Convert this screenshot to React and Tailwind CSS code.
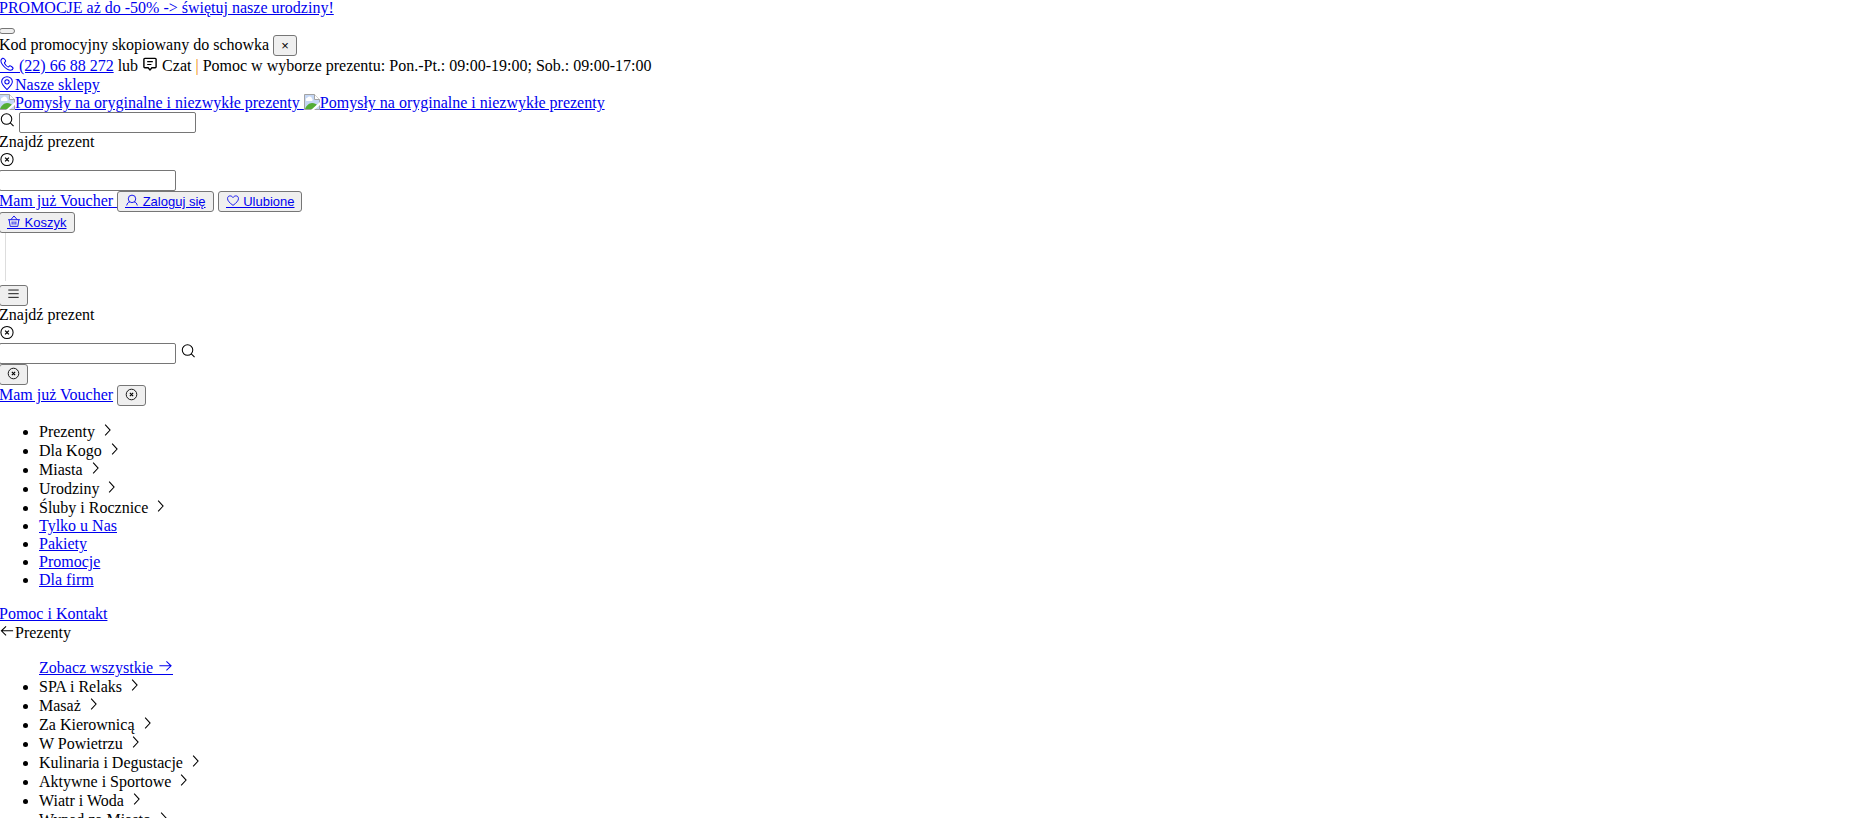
const SHAPES = {
  phone: <path d="M3.300 1.300C1 2.600 .8 5 3.200 8.200s5.600 5.600 8.300 5.900c1.600.1 2.700-1 3-2.100.1-.6-2.700-2.700-3.400-2.600-.8.100-1 1.200-1.700 1.200C8 10.500 5.200 7.300 5.300 6.200c.1-.8 1.200-.9 1.300-1.700C6.700 3.700 4.600.8 3.300 1.300z" />,
  chat: (
    <>
      <path strokeWidth="1.500" d="M2.500 1.500h11a1 1 0 0 1 1 1v8a1 1 0 0 1-1 1H10L8 13.800 6 11.500H2.500a1 1 0 0 1-1-1v-8a1 1 0 0 1 1-1z" />
      <path strokeWidth="1.300" d="M5 5h6M5 8h4.500" />
    </>
  ),
  pin: (
    <>
      <path d="M8 14.500C4.500 11.200 2.300 8.800 2.300 6.200a5.700 5.500 0 0 1 11.400 0c0 2.600-2.200 5-5.700 8.300z" />
      <circle cx="8" cy="6.200" r="2.300" />
    </>
  ),
  search: (
    <>
      <circle cx="7.500" cy="6.500" r="5.600" />
      <path d="m11.500 10.500 3.500 3.500" />
    </>
  ),
  close: (
    <>
      <circle cx="8" cy="8" r="6.500" />
      <path strokeWidth="1.400" d="m6 6 4 4m0-4-4 4" />
    </>
  ),
  user: (
    <>
      <circle cx="8" cy="6" r="4.600" />
      <path d="M1.500 14.200c.5-2.800 2-4.200 3.800-4.500M14.500 14.200c-.5-2.800-2-4.200-3.800-4.500" />
    </>
  ),
  heart: <path d="M8 14C3.500 10.500 1.300 8.500 1.300 5.500 1.300 1.700 6 1.300 8 4.400c2-3.100 6.700-2.700 6.700 1.100C14.700 8.500 12.500 10.500 8 14z" />,
  basket: <path d="M.8 5.800h14.400M2 5.800 3.300 14h9.400L14 5.800M4 5.800 8 1.200l4 4.600M5.700 8v3.800M8 8v3.800M10.300 8v3.800" />,
  menu: <path d="M1.600 2.500h12.800M1.600 7h12.800M1.600 11.500h12.800" />,
  chevron: <path d="m6 1.800 5.300 5.700L6 13.200" />,
  left: <path d="M14.500 7.300H2m5-4.800-5 4.800 5 4.800" />,
  right: <path d="M2 7.300h12.500M9.500 2.500l5 4.800-5 4.800" />,
};

const SIZES = {
  text: "h-[15px] w-4",
  label: "h-[13px] w-[14px]",
  small: "h-[13px] w-[13px]",
};

function Icon({ name, size = "text", underlined }) {
  const line = underlined ? "border-b border-current box-content align-[-2px]" : "align-[-1px]";
  return (
    <svg viewBox="0 0 16 16" fill="none" stroke="currentColor" strokeWidth="1.1" aria-hidden="true" className={`inline-block ${SIZES[size]} ${line}`}>
      {SHAPES[name]}
    </svg>
  );
}

function MissingPicture() {
  return (
    <svg viewBox="0 0 16 16" aria-hidden="true" className="inline-block h-4 w-4 align-[-2px]">
      <path d="M.5.5h10l5 5v10H.5z" fill="#c5d7f5" stroke="#a3a3a3" />
      <path d="M2.500 7a2 2 0 0 1 1-3.500 2.500 2.500 0 0 1 4.500 1A1.500 1.500 0 0 1 8 7z" fill="#fff" />
      <path d="M1 15c1-3 4-6 7-6s4 1 5 2l-4 4z" fill="#53ad35" />
      <path d="M7 16 16 8v3l-6 5z" fill="#fff" />
      <path d="M10.500.5v5h5" fill="#fff" stroke="#a3a3a3" />
    </svg>
  );
}

function Link({ children }) {
  return <a href="#" className="text-[#0000ee] underline">{children}</a>;
}

const BUTTON = "inline-block h-[21px] rounded-[3px] border border-[#767676] bg-[#efefef] px-[7px] align-top font-['Liberation_Sans',sans-serif] text-[13px] leading-[19px]";

function Button({ children, label, link }) {
  return (
    <button type="button" aria-label={label} className={`${BUTTON} ${link ? "text-[#0000ee] underline" : "text-black"}`}>
      {children}
    </button>
  );
}

function Field({ label }) {
  return <input type="text" aria-label={label} className="inline-block h-[21px] w-[177px] rounded-[2px] border border-[#767676] bg-white px-1 align-top text-[13px]" />;
}

function Tall({ children, as: Tag = "div" }) {
  return <Tag className="h-[19px] pt-px leading-[18px]">{children}</Tag>;
}

function Control({ children }) {
  return <div className="h-[21px] leading-5">{children}</div>;
}

const MAIN = ["Prezenty", "Dla Kogo", "Miasta", "Urodziny", "Śluby i Rocznice"];
const LINKS = ["Tylko u Nas", "Pakiety", "Promocje", "Dla firm"];
const GIFTS = ["SPA i Relaks", "Masaż", "Za Kierownicą", "W Powietrzu", "Kulinaria i Degustacje", "Aktywne i Sportowe", "Wiatr i Woda", "Wypad za Miasto"];

function Expandable({ text }) {
  return (
    <Tall as="li">
      {text} <Icon name="chevron" />
    </Tall>
  );
}

export default function App() {
  return (
    <div className="h-screen overflow-hidden bg-white">
      <div className="-ml-px whitespace-nowrap font-['Liberation_Serif',serif] text-[16px] leading-[18px] text-black">
        <header>
          <div className="h-[17px] leading-4"><Link>PROMOCJE aż do -50% -&gt; świętuj nasze urodziny!</Link></div>
          <button type="button" aria-label="Zamknij promocję" className="mt-[11px] mb-px block h-[6px] w-4 rounded-[3px] border border-[#767676] bg-[#efefef]" />
          <Control>Kod promocyjny skopiowany do schowka <Button label="Zamknij">×</Button></Control>
          <Tall>
            <Link><Icon name="phone" underlined /> (22) 66 88 272</Link> lub <Icon name="chat" /> Czat <span className="text-[#f08700]">|</span> Pomoc w wyborze prezentu: Pon.-Pt.: 09:00-19:00; Sob.: 09:00-17:00
          </Tall>
          <Tall><Link><Icon name="pin" underlined />Nasze sklepy</Link></Tall>
          <div className="h-[18px]">
            <Link><MissingPicture />Pomysły na oryginalne i niezwykłe prezenty </Link>
            <Link><MissingPicture />Pomysły na oryginalne i niezwykłe prezenty</Link>
          </div>
          <Control><Icon name="search" /> <Field label="Szukaj" /></Control>
          <div>Znajdź prezent</div>
          <Tall><Icon name="close" /></Tall>
          <Control><Field label="Znajdź prezent" /></Control>
          <Control>
            <Link>Mam już Voucher </Link>
            <Button link><Icon name="user" size="label" underlined /> Zaloguj się</Button>{" "}
            <Button link><Icon name="heart" size="label" underlined /> Ulubione</Button>
          </Control>
          <Control><Button link><Icon name="basket" size="label" underlined /> Koszyk</Button></Control>
          <div className="mb-1 ml-[6px] h-12 border-l border-[#dddddd]" />
          <Control><Button label="Menu"><Icon name="menu" size="small" /></Button></Control>
          <div>Znajdź prezent</div>
          <Tall><Icon name="close" /></Tall>
          <Control><Field label="Znajdź prezent w menu" /> <Icon name="search" /></Control>
          <Control><Button label="Wyczyść"><Icon name="close" size="small" /></Button></Control>
          <Control><Link>Mam już Voucher</Link> <Button label="Zamknij menu"><Icon name="close" size="small" /></Button></Control>
        </header>
        <nav>
          <ul className="my-4 list-disc pl-10">
            {MAIN.map((text) => <Expandable key={text} text={text} />)}
            {LINKS.map((text) => <li key={text}><Link>{text}</Link></li>)}
          </ul>
          <div><Link>Pomoc i Kontakt</Link></div>
          <Tall><Icon name="left" />Prezenty</Tall>
          <ul className="my-4 list-disc pl-10">
            <li className="h-[19px] list-none pt-px"><Link>Zobacz wszystkie <Icon name="right" underlined /></Link></li>
            {GIFTS.map((text) => <Expandable key={text} text={text} />)}
          </ul>
        </nav>
      </div>
    </div>
  );
}
